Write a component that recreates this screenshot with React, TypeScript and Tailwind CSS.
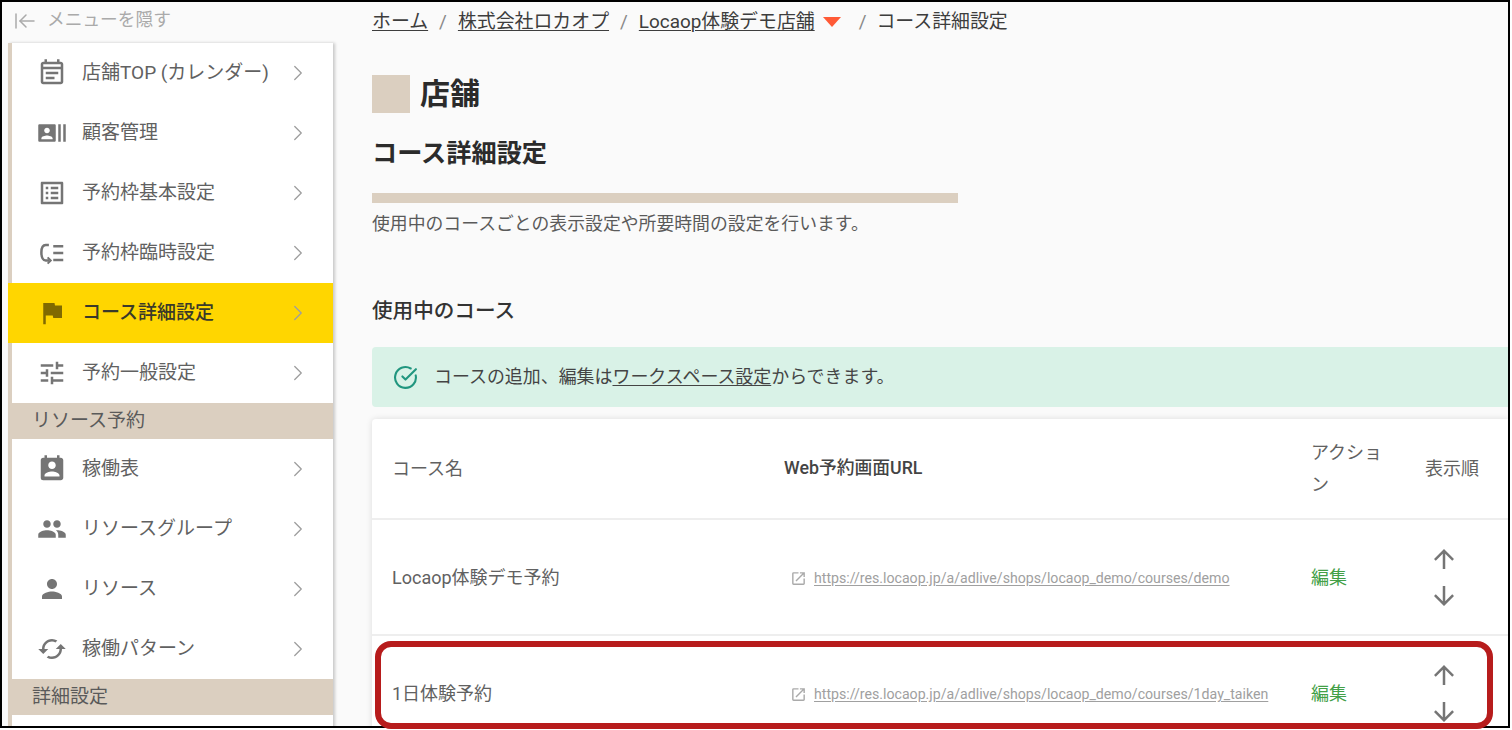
import type { ReactNode } from "react"
import { ArrowLeftToLine, ChevronRight, CircleCheckBig } from "lucide-react"
import {
  MdArrowDownward,
  MdArrowUpward,
  MdCached,
  MdFlag,
  MdOpenInNew,
  MdOutlineEventNote,
  MdOutlineListAlt,
  MdPeople,
  MdPermContactCalendar,
  MdPerson,
  MdRecentActors,
  MdTune,
} from "react-icons/md"

function TemporaryIcon() {
  return (
    <svg viewBox="0 0 24 24" width="30" height="30" fill="none" stroke="currentColor" strokeWidth="2">
      <path d="M9.500 5.500H7C5 5.500 3.500 7.500 3.500 11.500s1.500 6.500 3.500 6.500h3" />
      <path d="M8.500 15.500l2.500 2.500-2.500 2.500" strokeWidth="1.600" />
      <path d="M13 6.500H21M13 12H21M13 17.500H21" />
    </svg>
  )
}

const shopMenu: { label: string; icon: ReactNode; active?: boolean }[] = [
  { label: "店舗TOP (カレンダー)", icon: <MdOutlineEventNote size={30} /> },
  { label: "顧客管理", icon: <MdRecentActors size={30} /> },
  { label: "予約枠基本設定", icon: <MdOutlineListAlt size={30} /> },
  { label: "予約枠臨時設定", icon: <TemporaryIcon /> },
  { label: "コース詳細設定", icon: <MdFlag size={30} />, active: true },
  { label: "予約一般設定", icon: <MdTune size={30} /> },
]

const resourceMenu: { label: string; icon: ReactNode; active?: boolean }[] = [
  { label: "稼働表", icon: <MdPermContactCalendar size={30} /> },
  { label: "リソースグループ", icon: <MdPeople size={30} /> },
  { label: "リソース", icon: <MdPerson size={30} /> },
  { label: "稼働パターン", icon: <MdCached size={30} /> },
]

const courses = [
  {
    name: "Locaop体験デモ予約",
    url: "https://res.locaop.jp/a/adlive/shops/locaop_demo/courses/demo",
  },
  {
    name: "1日体験予約",
    url: "https://res.locaop.jp/a/adlive/shops/locaop_demo/courses/1day_taiken",
  },
]

function MenuItem({ label, icon, active }: { label: string; icon: ReactNode; active?: boolean }) {
  return (
    <div
      className={
        active
          ? "-ml-1 flex h-[60px] items-center bg-[#ffd600] pl-[32px] pr-[22px] font-medium text-[#3a3a2a]"
          : "flex h-[60px] items-center pl-[28px] pr-[22px] text-[#616161]"
      }
    >
      <span
        className={
          active
            ? "flex w-[24px] justify-center text-[#806a00] [&>svg]:shrink-0"
            : "flex w-[24px] justify-center text-[#757575] [&>svg]:shrink-0"
        }
      >
        {icon}
      </span>
      <span className="ml-[18px] flex-1 whitespace-nowrap text-[19px]">{label}</span>
      <ChevronRight size={26} strokeWidth={1.2} className="text-[#9e9e9e]" />
    </div>
  )
}

function SectionHeader({ children }: { children: ReactNode }) {
  return (
    <div className="flex h-[36px] items-center bg-[#dbcfc0] pl-[20px] text-[19px] text-[#5a5a5a]">{children}</div>
  )
}

function Crumb({ children }: { children: ReactNode }) {
  return <span className="underline decoration-1 underline-offset-2">{children}</span>
}

export default function App() {
  return (
    <div className="relative h-[730px] w-[1512px] overflow-hidden bg-white font-['Roboto','Noto_Sans_CJK_JP',sans-serif]">
      <div className="flex h-[728px] w-[1510px] overflow-hidden border-2 border-black bg-[#fafafa]">
        <div className="w-[331px] shrink-0">
          <div className="flex h-[41px] items-center pb-[4px] pl-[11px] text-[17.7px] text-[#aaaaaa]">
            <ArrowLeftToLine size={24} strokeWidth={1.5} />
            <span className="ml-[10px]">メニューを隠す</span>
          </div>
          <aside className="ml-[6px] h-[690px] border-l-4 border-[#dbcfc0] bg-white shadow-[2px_0_3px_rgba(0,0,0,0.2)]">
            {shopMenu.map((item) => (
              <MenuItem key={item.label} {...item} />
            ))}
            <SectionHeader>リソース予約</SectionHeader>
            {resourceMenu.map((item) => (
              <MenuItem key={item.label} {...item} />
            ))}
            <SectionHeader>詳細設定</SectionHeader>
          </aside>
        </div>

        <main className="min-w-0 flex-1 pl-[39px]">
          <div className="flex h-[40px] items-center whitespace-nowrap text-[18.9px] text-[#3d3d3d]">
            <Crumb>ホーム</Crumb>
            <span className="mx-[11px] text-[#888888]">/</span>
            <Crumb>株式会社ロカオプ</Crumb>
            <span className="mx-[11px] text-[#888888]">/</span>
            <Crumb>Locaop体験デモ店舗</Crumb>
            <svg viewBox="0 0 18 10" width="18" height="10" className="ml-[8px] text-[#ff5a36]">
              <path d="M0 0h18L9 10z" fill="currentColor" />
            </svg>
            <span className="ml-[18px] mr-[10px] text-[#888888]">/</span>
            <span>コース詳細設定</span>
          </div>

          <div className="mt-[33px] flex items-center">
            <div className="h-[38px] w-[38px] bg-[#dbcfc0]" />
            <h1 className="ml-[10px] text-[30px] leading-[38px] font-bold text-[#2b2b2b]">店舗</h1>
          </div>
          <h2 className="mt-[24px] text-[25.2px] leading-[34px] font-bold text-[#2b2b2b]">コース詳細設定</h2>
          <div className="mt-[22px] h-[10px] w-[586px] bg-[#dbcfc0]" />
          <p className="mt-[9px] text-[17.85px] leading-[24px] text-[#5a5a5a]">
            使用中のコースごとの表示設定や所要時間の設定を行います。
          </p>
          <h3 className="mt-[61px] text-[20.6px] leading-[28px] font-medium text-[#333333]">使用中のコース</h3>

          <div className="mt-[22px] flex h-[60px] items-center rounded-l-[4px] bg-[#d9f2e7] pl-[21px] text-[17.95px] text-[#444444]">
            <CircleCheckBig size={25} strokeWidth={2} className="text-[#21967f]" />
            <span className="ml-[16px]">
              コースの追加、編集は<span className="underline underline-offset-2">ワークスペース設定</span>からできます。
            </span>
          </div>

          <div className="mt-[12px] rounded-l-[4px] bg-white text-[18px] text-[#616161] shadow-[0_0_6px_rgba(0,0,0,0.12)]">
            <div className="grid h-[101px] grid-cols-[392px_527px_114px_1fr] items-center border-b-2 border-[#eeeeee]">
              <div className="pl-[20px]">コース名</div>
              <div className="pl-[20px] text-[17.8px] font-medium text-[#444444]">Web予約画面URL</div>
              <div className="pl-[20px] pr-[18px] leading-[32px]">アクション</div>
              <div className="pl-[20px]">表示順</div>
            </div>
            {courses.map((course) => (
              <div
                key={course.name}
                className="grid h-[116px] grid-cols-[392px_527px_114px_1fr] items-center border-b-2 border-[#eeeeee]"
              >
                <div className="pl-[20px]">{course.name}</div>
                <div className="flex items-center whitespace-nowrap pl-[26px] pt-[3px] text-[14.15px] text-[#a0a0a0]">
                  <MdOpenInNew size={17} className="text-[#aaaaaa]" />
                  <span className="ml-[7px] underline underline-offset-2">{course.url}</span>
                </div>
                <div className="pl-[20px] text-[#43a047]">編集</div>
                <div className="flex flex-col items-start gap-[7px] pl-[24px] text-[#757575]">
                  <MdArrowUpward size={30} />
                  <MdArrowDownward size={30} />
                </div>
              </div>
            ))}
          </div>
        </main>
      </div>

      <div className="absolute top-[641px] left-[375px] h-[88px] w-[1118px] rounded-[16px] border-[6px] border-[#b71c1c]" />
    </div>
  )
}
